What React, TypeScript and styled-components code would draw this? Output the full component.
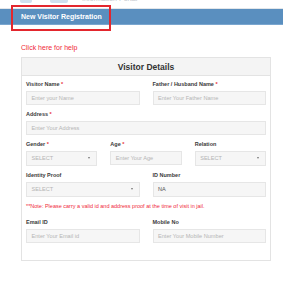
import React from 'react'
import styled, { createGlobalStyle } from 'styled-components'

const GlobalStyle = createGlobalStyle`
  html, body {
    margin: 0;
    padding: 0;
    background: #fff;
    font-family: "Liberation Sans", Arial, sans-serif;
  }
  * { box-sizing: border-box; }
`

const Page = styled.div`
  position: relative;
  width: 283px;
  height: 300px;
  overflow: hidden;
  background: #fff;
`

const TopStrip = styled.div`
  height: 9px;
  overflow: hidden;
  border-bottom: 1px solid #e2e6ea;
`

const Brand = styled.div`
  display: flex;
  align-items: flex-end;
  gap: 6px;
  margin-top: -6px;
  padding-left: 20px;
  height: 9px;
  span {
    font-size: 7px;
    color: #c2c6cc;
    margin-left: 8px;
    line-height: 9px;
  }
`

const Bar = styled.div`
  height: 16px;
  background: #5a8fbf;
  border-bottom: 1px solid #7aa6cf;
  display: flex;
  align-items: center;
  padding-left: 21px;
  color: #fff;
  font-weight: bold;
  font-size: 7px;
`

const Highlight = styled.div`
  position: absolute;
  left: 11px;
  top: 5px;
  width: 100px;
  height: 26px;
  border: 2px solid #e3262d;
  pointer-events: none;
`

const HelpLink = styled.a`
  display: block;
  margin: 18px 0 0 21px;
  font-size: 7px;
  line-height: 9px;
  color: #f0283a;
  text-decoration: none;
`

const Panel = styled.div`
  margin: 5px 0 0 21px;
  width: 250px;
  border: 1px solid #e3e3e3;
  background: #fff;
`

const PanelHead = styled.div`
  height: 18px;
  background: #f4f4f4;
  border-bottom: 1px solid #e3e3e3;
  display: flex;
  align-items: center;
  justify-content: center;
  font-weight: bold;
  font-size: 8.5px;
  color: #333;
`

const PanelBody = styled.div`
  padding: 5px 4px 11px 4px;
`

const Row = styled.div<{ $cols: number }>`
  display: grid;
  grid-template-columns: repeat(${p => p.$cols}, 1fr);
  column-gap: 13px;
`

const Group = styled.div<{ $span?: number }>`
  grid-column: span ${p => p.$span || 1};
  margin-bottom: 6.5px;
`

const Label = styled.div`
  font-size: 5.5px;
  line-height: 7px;
  font-weight: bold;
  color: #3a3a3a;
  margin-bottom: 2.5px;
  b {
    color: #e8333a;
  }
`

const Field = styled.div<{ $tall?: boolean }>`
  height: ${p => (p.$tall ? 15 : 14)}px;
  background: #f6f6f6;
  border: 1px solid #e6e6e6;
  display: flex;
  align-items: center;
  justify-content: space-between;
  padding: 0 6px 0 4.5px;
  font-size: 5.6px;
  color: #b5b5b5;
`

const Value = styled.span`
  color: #555;
`

const Caret = styled.span`
  width: 0;
  height: 0;
  border-left: 1.5px solid transparent;
  border-right: 1.5px solid transparent;
  border-top: 2px solid #777;
`

const Note = styled.div`
  font-size: 5.5px;
  line-height: 7px;
  color: #f0283a;
  margin: 0 0 9px 0;
  white-space: nowrap;
`

const Req = () => <b> *</b>

const Select = () => (
  <Field $tall>
    <span>SELECT</span>
    <Caret />
  </Field>
)

const App = () => {
  return (
    <Page>
      <GlobalStyle />
      <TopStrip>
        <Brand>
          <svg width="48" height="9" viewBox="0 0 48 9">
            <rect x="0" y="0" width="12" height="9" rx="2" fill="#cfe0ef" />
            <rect x="30" y="0" width="18" height="9" rx="2" fill="#cfe0ef" />
          </svg>
          <span>Information Portal</span>
        </Brand>
      </TopStrip>
      <Bar>New Visitor Registration</Bar>
      <Highlight />
      <HelpLink href="#">Click here for help</HelpLink>
      <Panel>
        <PanelHead>Visitor Details</PanelHead>
        <PanelBody>
          <Row $cols={2}>
            <Group>
              <Label>Visitor Name<Req /></Label>
              <Field>Enter your Name</Field>
            </Group>
            <Group>
              <Label>Father / Husband Name<Req /></Label>
              <Field>Enter Your Father Name</Field>
            </Group>
            <Group $span={2}>
              <Label>Address<Req /></Label>
              <Field>Enter Your Address</Field>
            </Group>
          </Row>
          <Row $cols={3}>
            <Group>
              <Label>Gender<Req /></Label>
              <Select />
            </Group>
            <Group>
              <Label>Age<Req /></Label>
              <Field>Enter Your Age</Field>
            </Group>
            <Group>
              <Label>Relation</Label>
              <Select />
            </Group>
          </Row>
          <Row $cols={2}>
            <Group>
              <Label>Identity Proof</Label>
              <Select />
            </Group>
            <Group>
              <Label>ID Number</Label>
              <Field $tall><Value>NA</Value></Field>
            </Group>
          </Row>
          <Note>**Note: Please carry a valid id and address proof at the time of visit in jail.</Note>
          <Row $cols={2}>
            <Group>
              <Label>Email ID</Label>
              <Field>Enter Your Email id</Field>
            </Group>
            <Group>
              <Label>Mobile No</Label>
              <Field>Enter Your Mobile Number</Field>
            </Group>
          </Row>
        </PanelBody>
      </Panel>
    </Page>
  )
}

export default App
